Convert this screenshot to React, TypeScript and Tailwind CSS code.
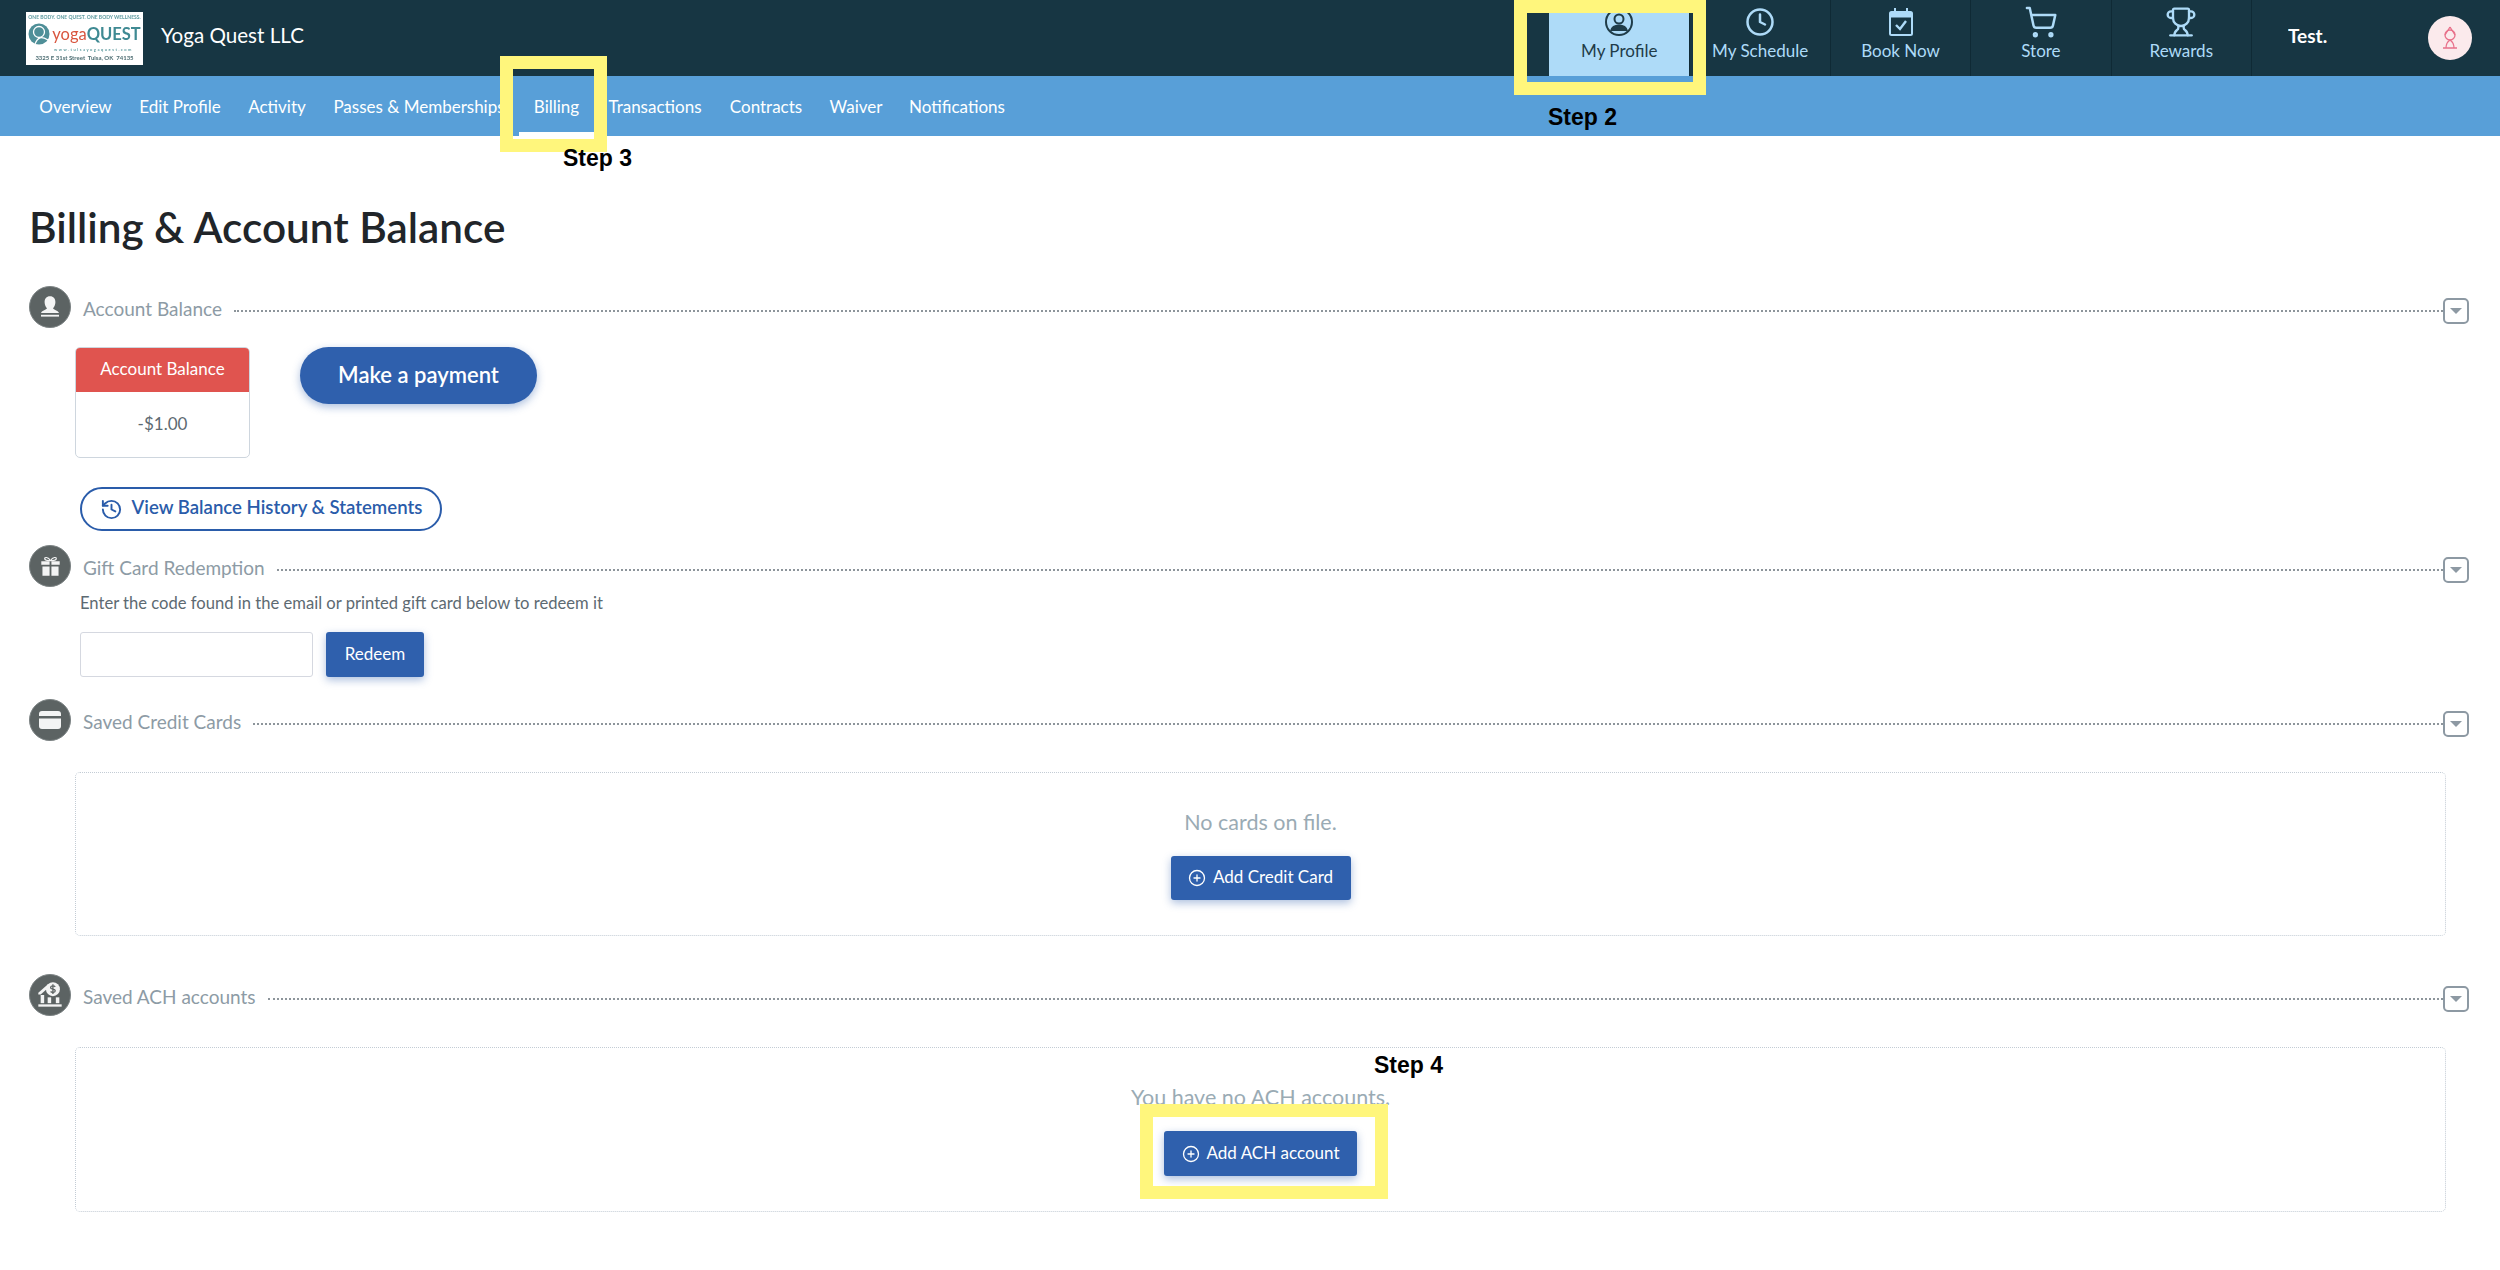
import type { ReactNode } from 'react';
import { Clock, ShoppingCart, Trophy, History, CirclePlus } from 'lucide-react';

const tabs = [
  { label: 'Overview', width: 'w-[99px]' },
  { label: 'Edit Profile', width: 'w-[110px]' },
  { label: 'Activity', width: 'w-[84px]' },
  { label: 'Passes & Memberships', width: 'w-[200px]' },
  { label: 'Billing', width: 'w-[75px]', active: true },
  { label: 'Transactions', width: 'w-[122px]' },
  { label: 'Contracts', width: 'w-[100px]' },
  { label: 'Waiver', width: 'w-[80px]' },
  { label: 'Notifications', width: 'w-[122px]' },
];

function ProfileIcon() {
  return (
    <svg width="30" height="30" viewBox="0 0 30 30" fill="none" stroke="currentColor" strokeWidth="2">
      <circle cx="15" cy="15" r="13" />
      <circle cx="15" cy="12" r="4.500" />
      <path d="M7 24c1-4 4-5.500 8-5.500s7 1.500 8 5.500" fill="currentColor" />
    </svg>
  );
}

function CalendarIcon() {
  return (
    <svg width="30" height="30" viewBox="0 0 30 30" fill="none" stroke="currentColor" strokeWidth="2">
      <rect x="4" y="5" width="22" height="23" rx="1.500" />
      <path d="M4 8h22" strokeWidth="5" />
      <path d="M9 1v5M21 1v5" />
      <path d="M10 18l4 4 6-8" strokeWidth="2.400" />
    </svg>
  );
}

function Logo() {
  return (
    <div className="flex h-[53px] w-[117px] shrink-0 flex-col items-center justify-between bg-white py-[3px] leading-none blur-[0.4px]">
      <div className="text-[5px] font-bold whitespace-nowrap text-[#5c9a9f]">ONE BODY. ONE QUEST. ONE BODY WELLNESS.</div>
      <div className="flex items-center gap-[2px]">
        <svg width="22" height="22" viewBox="0 0 22 22">
          <circle cx="11" cy="11" r="10.500" fill="#4f8f98" />
          <circle cx="11" cy="9" r="5.500" fill="none" stroke="#fff" strokeWidth="1.300" />
          <path d="M7 21c3-7 6-8 13-4" fill="none" stroke="#fff" strokeWidth="1.300" />
        </svg>
        <div className="text-[16.5px] whitespace-nowrap">
          <span className="text-[#d9563f]">yoga</span>
          <span className="font-bold text-[#3f8a93]">QUEST</span>
        </div>
      </div>
      <div className="pl-[18px] text-[4px] font-bold tracking-[1.500px] whitespace-nowrap text-[#5c9a9f]">www.tulsayogaquest.com</div>
      <div className="text-[6px] font-bold whitespace-nowrap text-[#4d6d72]">3325 E 31st Street&nbsp; Tulsa, OK&nbsp; 74135</div>
    </div>
  );
}

function TopItem({ icon, label, active }: { icon: ReactNode; label: string; active?: boolean }) {
  return (
    <div
      className={`flex h-[76px] w-[140.4px] flex-col items-center pt-[6px] ${
        active ? 'bg-[#aedbf8] text-[#1f3c49]' : 'border-l border-[#0f2a35] text-[#aedbf8]'
      }`}
    >
      <div className="flex h-[31px] items-center">{icon}</div>
      <div className="mt-[2px] text-[17px] leading-[24px] whitespace-nowrap">{label}</div>
    </div>
  );
}

function SectionHead({ icon, title }: { icon: ReactNode; title: string }) {
  return (
    <div className="flex h-[42px] items-start">
      <div className="flex h-[42px] w-[42px] shrink-0 items-center justify-center rounded-full border border-[#7b8283] bg-[#5c6363]">
        {icon}
      </div>
      <div className="ml-[12px] flex h-[42px] flex-1 items-center pt-[4px]">
        <span className="text-[19px] whitespace-nowrap text-[#8d9ba5]">{title}</span>
        <div className="mt-[4px] ml-[12px] flex-1 border-t-2 border-dotted border-[#8d959b]" />
        <div className="mt-[4px] flex h-[26px] w-[26px] items-center justify-center rounded-[5px] border-2 border-[#8d99a3]">
          <div className="h-0 w-0 border-x-[6px] border-t-[6px] border-x-transparent border-t-[#8d99a3]" />
        </div>
      </div>
    </div>
  );
}

function EmptyBox({ message, children }: { message: string; children: ReactNode }) {
  return (
    <div className="mr-[23px] ml-[46px] flex flex-col items-center rounded-[5px] border border-dotted border-[#c3ccd5] pt-[35px]">
      <div className="text-[21.5px] leading-[28px] text-[#9aabb4]">{message}</div>
      {children}
    </div>
  );
}

function AddButton({ label, size }: { label: string; size: string }) {
  return (
    <button className={`mt-[20px] flex items-center justify-center gap-[7px] rounded-[3px] bg-[#2f60ad] pb-[2px] text-[17px] text-white shadow-[0_3px_8px_rgba(47,96,173,0.4)] ${size}`}>
      <CirclePlus size={18} strokeWidth={1.75} className="mt-[2px]" />
      {label}
    </button>
  );
}

export default function App() {
  return (
    <div className="relative h-[1270px] w-[2500px] overflow-hidden bg-white font-['Lato','Noto_Sans',sans-serif] text-[#5d6a72]">
      <header className="flex h-[76px] items-center bg-[#173643] pl-[26px]">
        <Logo />
        <div className="mb-[5px] ml-[18px] text-[20.6px] whitespace-nowrap text-white">Yoga Quest LLC</div>
        <div className="ml-auto flex">
          <TopItem active icon={<ProfileIcon />} label="My Profile" />
          <TopItem icon={<Clock size={30} strokeWidth={2} />} label="My Schedule" />
          <TopItem icon={<CalendarIcon />} label="Book Now" />
          <TopItem icon={<ShoppingCart size={34} strokeWidth={1.75} />} label="Store" />
          <TopItem icon={<Trophy size={32} strokeWidth={1.75} />} label="Rewards" />
        </div>
        <div className="flex h-[76px] w-[249px] items-center border-l border-[#0f2a35] pl-[36px]">
          <div className="mb-[3px] w-[41px] overflow-hidden text-[19px] font-bold whitespace-nowrap text-white">Test.</div>
          <div className="ml-[99px] flex h-[44px] w-[44px] items-center justify-center rounded-full bg-[#fbeaec]">
            <svg width="20" height="24" viewBox="0 0 20 24" fill="none" stroke="#e8708a" strokeWidth="1.300">
              <circle cx="10" cy="9" r="5" />
              <path d="M10 1L5 9M10 1l5 8M6 22c0-4 1-6 4-8 3 2 4 4 4 8M3 22h14" />
            </svg>
          </div>
        </div>
      </header>

      <nav className="flex h-[60px] bg-[#589fd8] pl-[26px]">
        {tabs.map((tab) => (
          <div
            key={tab.label}
            className={`flex h-[60px] items-center justify-center pt-[1px] text-[17px] whitespace-nowrap text-white ${tab.width} ${
              tab.active ? 'border-b-4 border-white !pt-[5px]' : ''
            }`}
          >
            {tab.label}
          </div>
        ))}
      </nav>

      <main className="pt-[67px] pr-[31px] pl-[29px]">
        <h1 className="text-[42.3px] leading-[48px] font-semibold text-[#212529]">Billing &amp; Account Balance</h1>

        <div className="mt-[35px]">
          <SectionHead
            title="Account Balance"
            icon={
              <svg width="24" height="24" viewBox="0 0 20 20" fill="#f3f4f4">
                <path d="M10 1c3 0 4.500 2 4.500 5 0 2-1 4-2 5 .5 1.500 4 1.500 5 4H2.500c1-2.500 4.500-2.500 5-4-1-1-2-3-2-5 0-3 1.500-5 4.500-5z" />
                <rect x="2.500" y="16.500" width="15" height="1.500" />
              </svg>
            }
          />
        </div>
        <div className="mt-[19px] flex items-start pl-[46px]">
          <div className="flex h-[111px] w-[175px] flex-col overflow-hidden rounded-[5px] border border-[#ced6de]">
            <div className="-mx-px -mt-px flex h-[45px] items-center justify-center bg-[#e0544f] pb-[2px] text-[17px] text-white">Account Balance</div>
            <div className="flex flex-1 items-center justify-center pb-[2px] text-[17px]">-$1.00</div>
          </div>
          <button className="ml-[50px] h-[57px] w-[237px] rounded-full bg-[#2f60ad] pb-[2px] text-[22px] font-semibold text-white shadow-[0_3px_8px_rgba(47,96,173,0.4)]">
            Make a payment
          </button>
        </div>
        <button className="mt-[29px] ml-[51px] flex h-[44px] w-[362px] items-center justify-center gap-[9px] rounded-full border-2 border-[#2a5caa] pb-[2px] text-[18.6px] font-semibold text-[#2a5caa]">
          <History size={23} strokeWidth={2} className="mt-[2px]" />
          View Balance History &amp; Statements
        </button>

        <div className="mt-[14px]">
          <SectionHead
            title="Gift Card Redemption"
            icon={
              <svg width="23" height="23" viewBox="0 0 20 20" fill="#f3f4f4">
                <path d="M2 5.500h7.200v3H2zM10.800 5.500H18v3h-7.200zM3 10h6.200v8H3zM10.800 10H17v8h-6.200z" />
                <path d="M10 5C8 1.500 4.500 1.500 5 3.500 5.500 5 8 5 10 5zm0 0c2-3.500 5.500-3.500 5-1.500C14.500 5 12 5 10 5z" fill="none" stroke="#f3f4f4" />
              </svg>
            }
          />
        </div>
        <p className="mt-[4px] ml-[51px] text-[16.6px] leading-[24px]">Enter the code found in the email or printed gift card below to redeem it</p>
        <div className="mt-[17px] ml-[51px] flex">
          <input className="h-[45px] w-[233px] rounded-[3px] border border-[#d5d8e0] bg-white" />
          <button className="ml-[13px] h-[45px] w-[98px] rounded-[3px] bg-[#2f60ad] pb-[2px] text-[17px] text-white shadow-[0_3px_8px_rgba(47,96,173,0.4)]">Redeem</button>
        </div>

        <div className="mt-[22px]">
          <SectionHead
            title="Saved Credit Cards"
            icon={
              <svg width="24" height="20" viewBox="0 0 24 20">
                <rect x="1" y="1" width="22" height="18" rx="3" fill="#f3f4f4" />
                <rect x="1" y="6" width="22" height="2.500" fill="#5c6363" />
              </svg>
            }
          />
        </div>
        <div className="mt-[31px]">
          <EmptyBox message="No cards on file.">
            <AddButton label="Add Credit Card" size="h-[44px] w-[180px]" />
            <div className="h-[35px]" />
          </EmptyBox>
        </div>

        <div className="mt-[38px]">
          <SectionHead
            title="Saved ACH accounts"
            icon={
              <svg width="28" height="28" viewBox="0 0 24 24" fill="#f3f4f4">
                <path d="M2 10L10 3l2 1.500-8 7H2z" />
                <circle cx="14.500" cy="7" r="6" />
                <path d="M16.500 5c-1-1.200-4-1-4 .7 0 1.800 4 .8 4 2.600 0 1.700-3 1.900-4 .7M14.500 2.800v8.400" fill="none" stroke="#5c6363" strokeWidth="1.100" />
                <rect x="4" y="12" width="3" height="7" />
                <rect x="10" y="14" width="3" height="5" />
                <rect x="17" y="14" width="3" height="5" />
                <rect x="2" y="20" width="20" height="2" />
              </svg>
            }
          />
        </div>
        <div className="mt-[31px]">
          <EmptyBox message="You have no ACH accounts.">
            <AddButton label="Add ACH account" size="h-[45px] w-[193px]" />
            <div className="h-[35px]" />
          </EmptyBox>
        </div>
      </main>

      {/* yellow tutorial marks pasted over the page */}
      <div className="absolute top-0 left-[1514px] h-[95px] w-[192px] border-[13px] border-[#fff67c]" />
      <div className="absolute top-[56px] left-[500px] h-[96px] w-[107px] border-[13px] border-[#fff67c]" />
      <div className="absolute top-[1104px] left-[1140px] h-[95px] w-[248px] border-[13px] border-[#fff67c]" />
      <div className="absolute top-[104px] left-[1548px] font-['Liberation_Sans',sans-serif] text-[23px] leading-[26px] font-bold text-black">Step 2</div>
      <div className="absolute top-[145px] left-[563px] font-['Liberation_Sans',sans-serif] text-[23px] leading-[26px] font-bold text-black">Step 3</div>
      <div className="absolute top-[1052px] left-[1374px] font-['Liberation_Sans',sans-serif] text-[23px] leading-[26px] font-bold text-black">Step 4</div>
    </div>
  );
}
